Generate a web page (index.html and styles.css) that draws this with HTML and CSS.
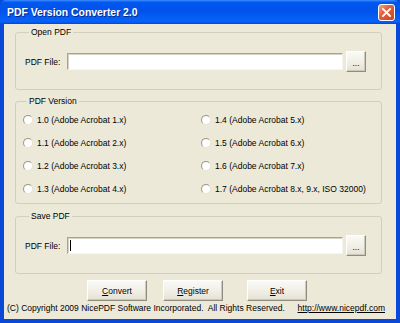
FILE: index.html
```html
<!DOCTYPE html>
<html lang="en">
<head>
	<meta charset="UTF-8">
	<title>PDF Version Converter 2.0</title>
	<link rel="stylesheet" href="styles.css">
</head>
<body>

<div class="window">
	<div class="titlebar">
		<span class="title">PDF Version Converter 2.0</span>
		<span class="close">
			<svg width="11" height="11" viewBox="0 0 11 11"><path d="M2 2 L9 9 M9 2 L2 9" stroke="#fff" stroke-width="1.8" stroke-linecap="square"/></svg>
		</span>
	</div>

	<div class="client">
		<!--打开文件-->
		<fieldset class="group group-open">
			<legend>Open PDF</legend>
			<div class="file-row">
				<label>PDF File:</label>
				<div class="textbox"></div>
				<button class="btn browse">...</button>
			</div>
		</fieldset>

		<!--版本选择-->
		<fieldset class="group group-version">
			<legend>PDF Version</legend>
			<div class="versions">
				<div class="radio"><span class="dot"></span>1.0 (Adobe Acrobat 1.x)</div>
				<div class="radio"><span class="dot"></span>1.1 (Adobe Acrobat 2.x)</div>
				<div class="radio"><span class="dot"></span>1.2 (Adobe Acrobat 3.x)</div>
				<div class="radio"><span class="dot"></span>1.3 (Adobe Acrobat 4.x)</div>
				<div class="radio"><span class="dot"></span>1.4 (Adobe Acrobat 5.x)</div>
				<div class="radio"><span class="dot"></span>1.5 (Adobe Acrobat 6.x)</div>
				<div class="radio"><span class="dot"></span>1.6 (Adobe Acrobat 7.x)</div>
				<div class="radio"><span class="dot"></span>1.7 (Adobe Acrobat 8.x, 9.x, ISO 32000)</div>
			</div>
		</fieldset>

		<!--保存文件-->
		<fieldset class="group group-save">
			<legend>Save PDF</legend>
			<div class="file-row">
				<label>PDF File:</label>
				<div class="textbox"><span class="caret"></span></div>
				<button class="btn browse">...</button>
			</div>
		</fieldset>

		<div class="actions">
			<button class="btn action"><u>C</u>onvert</button>
			<button class="btn action"><u>R</u>egister</button>
			<button class="btn action exit"><u>E</u>xit</button>
		</div>

		<div class="footer">
			<span>(C) Copyright 2009 NicePDF Software Incorporated.&nbsp; All Rights Reserved.</span>
			<a href="#">http://www.nicepdf.com</a>
		</div>
	</div>
</div>

</body>
</html>
```

FILE: styles.css
```css
*{margin: 0;padding: 0;box-sizing: border-box;}
body{
	font-family: "Liberation Sans", Arial, sans-serif;
	font-size: 8.5px;
	color: #000;
	background: #ece9d8;
}
/*窗口*/
.window{
	width: 400px;
	height: 323px;
	display: flex;
	flex-direction: column;
	background: #0a48d8;
}
.titlebar{
	height: 24px;
	display: flex;
	align-items: center;
	justify-content: space-between;
	padding: 0 5px 0 7px;
	background: linear-gradient(#3d8cff, #0058ee 10%, #0052ea 45%, #0562f8 85%, #0a5ef0 92%, #0045d8);
	border-radius: 6px 6px 0 0;
}
.title{
	color: #fff;
	font-weight: bold;
	font-size: 10.4px;
	text-shadow: 1px 1px 0 #0a2a8a;
}
.close{
	width: 17px;
	height: 17px;
	display: flex;
	align-items: center;
	justify-content: center;
	border: 1px solid #fff;
	border-radius: 3px;
	background: linear-gradient(135deg, #f3a38c, #e2613e 40%, #cc4421);
}
/*客户区*/
.client{
	flex: 1;
	margin: 0 4px 4px;
	padding-top: 2px;
	background: #ece9d8;
	display: flex;
	flex-direction: column;
}
.group{
	margin: 0 14px 0 11px;
	border: 1px solid #d0d0bf;
	border-radius: 3px;
	min-width: 0;
}
.group legend{
	margin-left: 4px;
	padding: 0 2px;
	line-height: 12px;
}
.group-open{
	padding: 13px 15px 17px 9px;
}
.group-version{
	margin-top: 5px;
	padding: 1px 9px 3px 7px;
}
.group-save{
	margin-top: 6px;
	padding: 13px 15px 17px 9px;
}
.file-row{
	display: flex;
	align-items: center;
	height: 21px;
}
.file-row label{
	width: 42px;
}
.textbox{
	flex: 1;
	height: 17px;
	display: flex;
	align-items: center;
	padding-left: 2px;
	background: #fff;
	border: 1px solid;
	border-color: #a5a396 #f6f5ee #f6f5ee #a5a396;
	box-shadow: inset 1px 1px 0 #d6d3c6;
}
.caret{
	width: 1px;
	height: 11px;
	background: #000;
}
/*按钮*/
.btn{
	font-family: inherit;
	font-size: 8.5px;
	color: #000;
	background: linear-gradient(#fafaf6, #efede4 60%, #e4e1d3);
	border: 1px solid;
	border-color: #fff #8f8c7e #8f8c7e #fff;
	box-shadow: inset -1px -1px 0 #cdcabb;
}
.browse{
	width: 20px;
	height: 21px;
	margin-left: 3px;
	line-height: 1;
	padding-top: 3px;
}
/*单选框*/
.versions{
	display: grid;
	grid-template-columns: 178px 1fr;
	grid-template-rows: repeat(4, 23px);
	grid-auto-flow: column;
}
.radio{
	display: flex;
	align-items: center;
	gap: 4px;
	white-space: nowrap;
}
.dot{
	width: 10px;
	height: 10px;
	border-radius: 50%;
	border: 1px solid;
	border-color: #9d9a8b #e6e4da #e6e4da #9d9a8b;
	background: radial-gradient(circle at 60% 60%, #fff 50%, #eeede6);
}
.actions{
	display: flex;
	gap: 16px;
	padding-left: 83px;
	margin-top: 6px;
}
.action{
	width: 60px;
	height: 21px;
}
.actions .exit{
	margin-left: 8px;
}
.footer{
	display: flex;
	justify-content: space-between;
	padding: 0 11px 0 3px;
	margin-top: 1px;
	line-height: 12px;
}
.footer a{
	color: #000;
}
```
